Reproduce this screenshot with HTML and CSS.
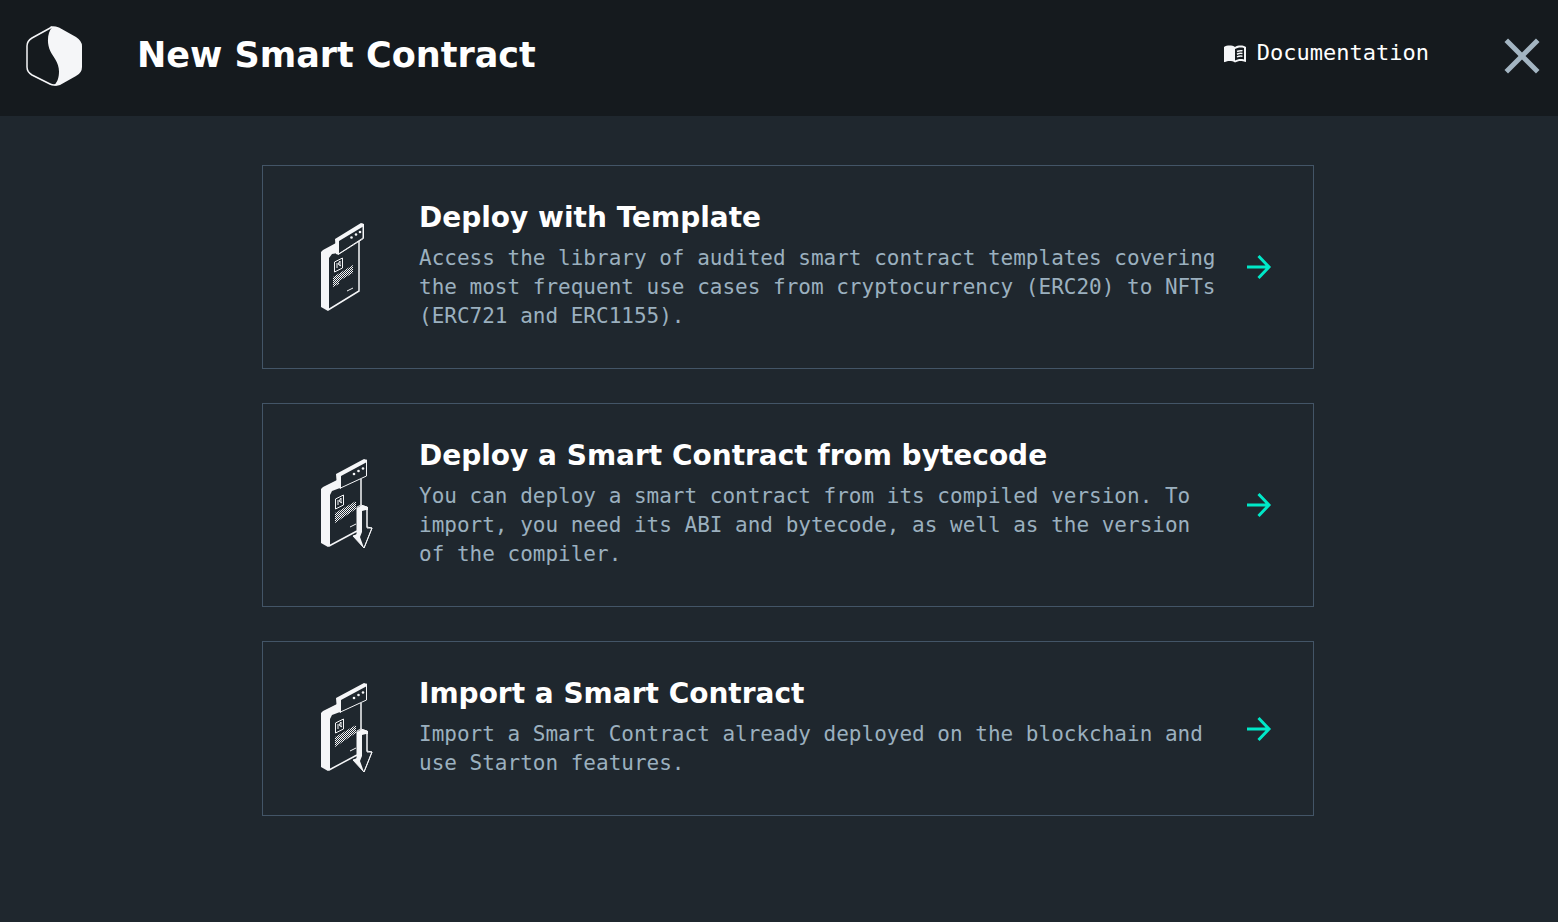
FILE: index.html
```html
<!DOCTYPE html>
<html lang="en">
<head>
<meta charset="utf-8">
<meta name="viewport" content="width=device-width, initial-scale=1">
<title>New Smart Contract</title>
<link rel="stylesheet" href="styles.css">
</head>
<body>
<svg class="sprite" aria-hidden="true">
  <defs>
    <pattern id="weave" width="2" height="2" patternUnits="userSpaceOnUse">
      <path class="fill" d="M0 0h1v1H0zM1 1h1v1H1z"/>
    </pattern>
    <symbol id="arrow" viewBox="0 0 36 36">
      <path class="stroke-accent" d="M6 18h22M17.500 7l10.500 11-10.500 11"/>
    </symbol>
    <symbol id="import-file" viewBox="0 0 80 110">
      <path class="fill" d="M16 39l2-2 14-7 3 8-8 3-2 4v51l-2 1-7-4z"/>
      <path class="line" d="M56 29v29M24 96l28-15"/>
      <path class="face" d="M32.500 24.500L61.500 10v16L35.500 38z"/>
      <path class="fill" d="M31 24l28-15 3 1v2L36 26v13l-4-2z"/>
      <circle class="fill" cx="49" cy="24" r="1.300"/><circle class="fill" cx="53.500" cy="21" r="1.300"/><circle class="fill" cx="58" cy="18.500" r="1.300"/>
      <path class="frame" d="M30.500 49l8-4v10l-8 4z"/>
      <path class="thin" d="M33 50v5M36 48l-2 3 3 2M36 48v5"/>
      <path class="weave" d="M30 63l21-12v8L30 73z"/>
      <path class="thin" d="M45 77l6-3"/>
      <path class="face" d="M52 57l4-2 6 2v20l5 1-8 20-11-12 4-1z"/>
      <path class="fill" d="M52 58l5-3 6 2v3h-2l-4 1v21l-2 5 4 11-11-12 4-2z"/>
      <path class="thin" d="M62 57v21l5 0-8 20"/>
    </symbol>
  </defs>
</svg>
<header class="topbar">
  <svg class="logo" viewBox="0 0 56 60" role="img" aria-label="Starton">
    <path class="logo-line" d="M26 1L6 12Q1 15 1 20v21q0 5 5 8l18 9q4 2 8 0"/>
    <path class="logo-fill" d="M24 .500q4-1 9 1L50 11q6 4 6 9v21q0 6-6 9L34 59q-3 1-6 .500c4-4 5-9 5-14 0-9-6-15-8.500-20C20 16 22 6 26 1.500z"/>
  </svg>
  <h1 class="title">New Smart Contract</h1>
  <a class="docs" href="#">
    <svg class="docs-icon" viewBox="0 0 24 24" aria-hidden="true">
      <path d="M21 5c-1.110-.350-2.330-.500-3.500-.500-1.950 0-4.050.400-5.500 1.500-1.450-1.100-3.550-1.500-5.500-1.500S2.450 4.900 1 6v14.650c0 .250.250.500.500.500.100 0 .150-.050.250-.050C3.100 20.450 5.050 20 6.500 20c1.950 0 4.050.400 5.500 1.500 1.350-.850 3.800-1.500 5.500-1.500 1.650 0 3.350.300 4.750 1.050.100.050.150.050.250.050.250 0 .500-.250.500-.500V6c-.600-.450-1.250-.750-2-1zm0 13.500c-1.100-.350-2.300-.500-3.500-.500-1.700 0-4.150.650-5.500 1.500V8c1.350-.850 3.800-1.500 5.500-1.500 1.200 0 2.400.150 3.500.500v11.500z"/>
      <path class="docs-lines" d="M14 10.500q2.500-1.200 5.500-.700M14 13.200q2.500-1.200 5.500-.700M14 15.900q2.500-1.200 5.500-.700"/>
    </svg>
    <span>Documentation</span>
  </a>
  <button class="close" type="button" aria-label="Close">
    <svg class="close-icon" viewBox="0 0 24 24" aria-hidden="true"><path d="M19 6.410L17.590 5 12 10.590 6.410 5 5 6.410 10.590 12 5 17.590 6.410 19 12 13.410 17.590 19 19 17.590 13.410 12z"/></svg>
  </button>
</header>
<main class="options">
  <a class="card" href="#">
    <svg class="card-icon" viewBox="0 0 80 114" aria-hidden="true">
      <path class="fill" d="M16 42l2-2 13-7 2 10-6 1-3 4v51l-1 2-7-4z"/>
      <path class="line" d="M54 30v51L23 100"/>
      <path class="face" d="M31.500 29.500L58 14v14L33.500 44z"/>
      <path class="fill" d="M30 29l26-16 3 1v2L34 31v14l-3-1z"/>
      <path class="thin" d="M58.500 14v14.500L34 44"/>
      <circle class="fill" cx="46.500" cy="27.500" r="1.300"/><circle class="fill" cx="51" cy="24.500" r="1.300"/><circle class="fill" cx="55" cy="22" r="1.300"/>
      <path class="frame" d="M29.500 52l8-4v10l-8 4z"/>
      <path class="thin" d="M32 53v5M35 51l-2 3 3 2M35 51v5"/>
      <path class="weave" d="M28 67l20-12v8L34 71v3l-6 3z"/>
      <path class="thin" d="M42 81l6-3"/>
    </svg>
    <div class="card-body">
      <h2 class="card-title">Deploy with Template</h2>
      <p class="card-text">Access the library of audited smart contract templates covering the most frequent use cases from cryptocurrency (ERC20) to NFTs (ERC721 and ERC1155).</p>
    </div>
    <svg class="card-arrow" aria-hidden="true"><use href="#arrow"/></svg>
  </a>
  <a class="card" href="#">
    <svg class="card-icon" viewBox="0 0 80 110" aria-hidden="true"><use href="#import-file"/></svg>
    <div class="card-body">
      <h2 class="card-title">Deploy a Smart Contract from bytecode</h2>
      <p class="card-text">You can deploy a smart contract from its compiled version. To import, you need its ABI and bytecode, as well as the version of the compiler.</p>
    </div>
    <svg class="card-arrow" aria-hidden="true"><use href="#arrow"/></svg>
  </a>
  <a class="card" href="#">
    <svg class="card-icon" viewBox="0 0 80 110" aria-hidden="true"><use href="#import-file"/></svg>
    <div class="card-body">
      <h2 class="card-title">Import a Smart Contract</h2>
      <p class="card-text">Import a Smart Contract already deployed on the blockchain and use Starton features.</p>
    </div>
    <svg class="card-arrow" aria-hidden="true"><use href="#arrow"/></svg>
  </a>
</main>
</body>
</html>
```
FILE: styles.css
```css
:root {
  --bg: #1f272e;
  --bar: #151a1e;
  --border: #435567;
  --muted: #9bb0bf;
  --white: #f5f6f8;
  --accent: #00e8c8;
}
* { box-sizing: border-box; }
body {
  margin: 0;
  min-height: 100vh;
  background: var(--bg);
  color: #fff;
  font-family: "DejaVu Sans Mono", monospace;
}
a { color: inherit; text-decoration: none; }
svg { display: block; flex: none; }
.sprite { position: absolute; width: 0; height: 0; }

.topbar {
  display: flex;
  align-items: center;
  height: 116px;
  padding: 0 6px 4px 26px;
  background: var(--bar);
}
.logo { width: 56px; height: 60px; }
.logo-line { fill: none; stroke: var(--white); stroke-width: 1.5; }
.logo-fill { fill: var(--white); }
.title {
  flex: 1;
  margin: 0;
  padding: 0 0 2px 55px;
  font: 700 35px/48px "DejaVu Sans", sans-serif;
}
.docs {
  display: flex;
  align-items: center;
  gap: 10px;
  margin-right: 63px;
  padding-bottom: 6px;
  font-size: 22px;
  line-height: 28px;
}
.docs-icon { width: 24px; height: 24px; fill: var(--white); }
.docs-lines { fill: none; stroke: var(--white); stroke-width: 1.5; }
.close { padding: 0; border: 0; background: none; }
.close-icon { width: 60px; height: 60px; fill: #a3b5c2; }

.options {
  display: flex;
  flex-direction: column;
  gap: 34px;
  max-width: 1070px;
  margin: 0 auto;
  padding: 49px 0 49px 18px;
}
.card {
  display: flex;
  align-items: center;
  padding: 0 36px 0 42px;
  border: 1px solid var(--border);
}
.card-icon { width: 80px; }
.card-body {
  flex: 1;
  margin: 0 24px 0 34px;
  padding: 32px 0 37px;
}
.card-title {
  margin: 0 0 7px;
  font: 700 28px/39px "DejaVu Sans", sans-serif;
}
.card-text {
  margin: 0;
  color: var(--muted);
  font-size: 21px;
  line-height: 29px;
}
.card-arrow { width: 36px; height: 36px; }
.stroke-accent { fill: none; stroke: var(--accent); stroke-width: 3; }
.fill { fill: var(--white); }
.face { fill: var(--bg); stroke: var(--white); stroke-width: 1; }
.line { fill: none; stroke: var(--white); stroke-width: 1.5; }
.thin { fill: none; stroke: var(--white); stroke-width: 1; }
.frame { fill: none; stroke: var(--white); stroke-width: 1; }
.weave { fill: url(#weave); }
```
